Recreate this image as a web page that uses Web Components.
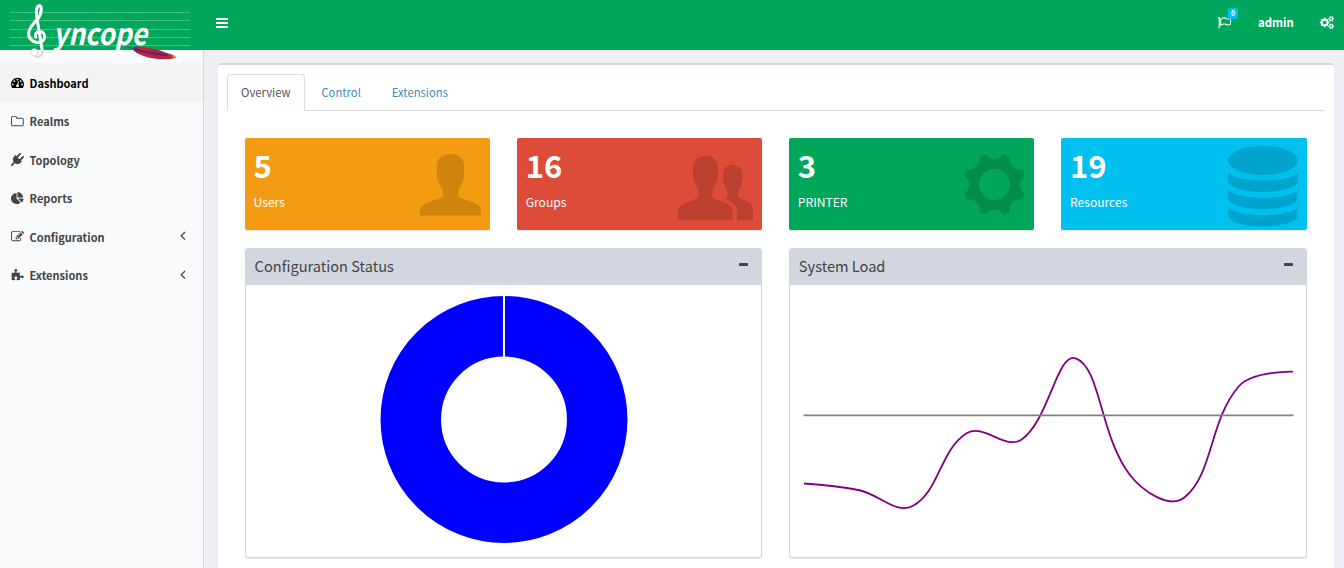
<!DOCTYPE html>
<html lang="en">
<head>
<meta charset="utf-8">
<title>Syncope</title>
<style>
html,body{margin:0;height:100%;overflow:hidden}
body{font-family:"Noto Sans CJK SC","Source Sans Pro",sans-serif;background:#ecf0f5;color:#333}
</style>
</head>
<body>
<console-app></console-app>
<script>
const define=(name,html,setup)=>customElements.define(name,class extends HTMLElement{
  connectedCallback(){
    if(this.shadowRoot)return;
    const root=this.attachShadow({mode:'open'});
    const t=document.createElement('template');
    t.innerHTML=typeof html==='function'?html(this):html;
    root.append(t.content.cloneNode(true));
    if(setup)setup(this,root);
  }
});

const small='q0 16-149 31-12 27-30 52 51 113 51 138 0 4-4 7-122 71-124 71-8 0-46-47t-52-68q-20 2-30 2t-30-2q-14 21-52 68t-46 47q-2 0-124-71-4-3-4-7 0-25 51-138-18-25-30-52-149-15-149-31v-140q0-16 149-31 13-29 30-52-51-113-51-138 0-4 4-7 4-2 35-20t59-34 30-16q8 0 46 46.5t52 67.5q20-2 30-2t30 2q51-71 92-112l6-2q4 0 124 70 4 3 4 7 0 25-51 138 17 23 30 52 149 15 149 31z';
const P=(d,box='0 0 1792 1792')=>[box,`<path d="${d}"/>`];
const icons={
 dashboard:P('M384 1152q0-53-37.5-90.5t-90.5-37.5-90.5 37.5-37.5 90.5 37.5 90.5 90.5 37.5 90.5-37.5 37.5-90.5zm192-448q0-53-37.5-90.5t-90.5-37.5-90.5 37.5-37.5 90.5 37.5 90.5 90.5 37.5 90.5-37.5 37.5-90.5zm428 481l101-382q6-26-7.5-48.5t-38.5-29.5-48 6.5-30 39.5l-101 382q-60 5-107 43.5t-63 98.5q-20 77 20 146t117 89 146-20 89-117q16-60-6-117t-72-91zm660-33q0-53-37.5-90.5t-90.5-37.5-90.5 37.5-37.5 90.5 37.5 90.5 90.5 37.5 90.5-37.5 37.5-90.5zm-640-640q0-53-37.5-90.5t-90.5-37.5-90.5 37.5-37.5 90.5 37.5 90.5 90.5 37.5 90.5-37.5 37.5-90.5zm448 192q0-53-37.5-90.5t-90.5-37.5-90.5 37.5-37.5 90.5 37.5 90.5 90.5 37.5 90.5-37.5 37.5-90.5zm320 448q0 261-141 483-19 29-54 29h-1402q-35 0-54-29-141-221-141-483 0-182 71-348t191-286 286-191 348-71 348 71 286 191 191 286 71 348z'),
 folder:P('M1600 1312v-704q0-40-28-68t-68-28h-704q-40 0-68-28t-28-68v-64q0-40-28-68t-68-28h-320q-40 0-68 28t-28 68v960q0 40 28 68t68 28h1216q40 0 68-28t28-68zm128-704v704q0 92-66 158t-158 66h-1216q-92 0-158-66t-66-158v-960q0-92 66-158t158-66h320q92 0 158 66t66 158v32h672q92 0 158 66t66 158z','60 0 1700 1792'),
 plug:P('M1755 453q37 38 37 90.5t-37 90.5l-401 400 150 150-160 160q-163 163-389.5 186.5t-411.5-100.5l-362 362h-181v-181l362-362q-124-185-100.5-411.5t186.5-389.5l160-160 150 150 400-401q38-37 91-37t90 37 37 90.5-37 90.5l-400 401 234 234 401-400q38-37 91-37t90 37z'),
 pie:P('M768 890l546 546q-106 108-247.5 168t-298.5 60q-209 0-385.5-103t-279.5-279.5-103-385.5 103-385.5 279.5-279.5 385.5-103v762zm187 6h773q0 157-60 298.5t-168 247.5zm709-128h-768v-768q209 0 385.5 103t279.5 279.5 103 385.5z'),
 edit:P('M888 1184l116-116-152-152-116 116v56h96v96h56zm440-720q-16-16-33 1l-350 350q-17 17-1 33t33-1l350-350q17-17 1-33zm80 594v190q0 119-84.5 203.5t-203.5 84.5h-832q-119 0-203.5-84.5t-84.5-203.5v-832q0-119 84.5-203.5t203.5-84.5h832q63 0 117 25 15 7 18 23 3 17-9 29l-49 49q-14 14-32 8-23-6-45-6h-832q-66 0-113 47t-47 113v832q0 66 47 113t113 47h832q66 0 113-47t47-113v-126q0-13 9-22l64-64q15-15 35-7t20 29zm-96-738l288 288-672 672h-288v-288zm444 132l-92 92-288-288 92-92q28-28 68-28t68 28l152 152q28 28 28 68t-28 68z'),
 puzzle:P('M1755 1083q0 81-44.5 135t-123.5 54q-41 0-77.5-17.5t-59-38-56.5-38-71-17.5q-110 0-110 124 0 39 16 115t15 115v5q-22 0-33 1-34 3-97.5 11.5t-115.5 13.5-98 5q-61 0-103-26.5t-42-83.5q0-37 17.5-71t38-56.5 38-59 17.5-77.5q0-79-54-123.5t-135-44.5q-84 0-143 45.5t-59 127.5q0 43 15 83t33.5 64.5 33.5 53 15 50.5q0 45-46 89-37 35-117 35-95 0-245-24-9-2-27.5-4t-27.5-4l-13-2q-1 0-3-1-2 0-2-1v-1024q2 1 17.5 3.5t34 5 21.5 3.5q150 24 245 24 80 0 117-35 46-44 46-89 0-22-15-50.5t-33.5-53-33.5-64.5-15-83q0-82 59-127.5t144-45.5q80 0 134 44.5t54 123.5q0 41-17.5 77.5t-38 59-38 56.5-17.5 71q0 57 42 83.5t103 26.5q64 0 180-15t163-17v2q-1 2-3.5 17.5t-5 34-3.5 21.5q-24 150-24 245 0 80 35 117 44 46 89 46 22 0 50.5-15t53-33.5 64.5-33.5 83-15q82 0 127.5 59t45.5 143z'),
 cogs:P('M896 896q0-106-75-181t-181-75-181 75-75 181 75 181 181 75 181-75 75-181zm768 512q0-52-38-90t-90-38-90 38-38 90q0 53 37.5 90.5t90.5 37.5 90.5-37.5 37.5-90.5zm0-1024q0-52-38-90t-90-38-90 38-38 90q0 53 37.5 90.5t90.5 37.5 90.5-37.5 37.5-90.5zm-384 421v185q0 10-7 19.5t-16 10.5l-155 24q-11 35-32 76 34 48 90 115 7 11 7 20 0 12-7 19-23 30-82.5 89.5t-78.5 59.5q-11 0-21-7l-115-90q-37 19-77 31-11 108-23 155-7 24-30 24h-186q-11 0-20-7.5t-10-17.5l-23-153q-34-10-75-31l-118 89q-7 7-20 7-11 0-21-8-144-133-144-160 0-9 7-19 10-14 41-53t47-61q-23-44-35-82l-152-24q-10-1-17-9.5t-7-19.5v-185q0-10 7-19.5t16-10.5l155-24q11-35 32-76-34-48-90-115-7-11-7-20 0-12 7-20 22-30 82-89t79-59q11 0 21 7l115 90q34-18 77-32 11-108 23-154 7-24 30-24h186q11 0 20 7.5t10 17.5l23 153q34 10 75 31l118-89q8-7 20-7 11 0 21 8 144 133 144 160 0 8-7 19-12 16-42 54t-45 60q23 48 34 82l152 23q10 2 17 10.5t7 19.5zm640 533v140'+small+'m0-1024v140'+small,'0 0 1920 1792'),
 angle:['0 0 6 10','<path d="M5 1L1.2 4.8 5 8.6" fill="none" stroke="currentColor" stroke-width="1.3"/>'],
 minus:['0 0 9 3','<rect width="9" height="3" rx=".8"/>'],
 bars:['0 0 12 10','<rect width="12" height="2" rx=".5"/><rect y="4" width="12" height="2" rx=".5"/><rect y="8" width="12" height="2" rx=".5"/>'],
 flag:['0 0 14 12','<circle cx="1.2" cy="1.2" r="1.1"/><rect x=".7" y="1" width="1.1" height="10.500"/><path d="M2.7 2.300C5-.1 7.200.9 8.700 1.700c1.500.7 2.700.1 3.800-.6v6c-1.500 1.200-2.800 1.200-4.100.5-1.800-1-3.700-.6-5.700.6z" fill="none" stroke="currentColor" stroke-width="1.100"/>'],
 person:['0 0 61 62','<path d="M30.500 0C39 0 44.500 5 44.300 13c.2 2-.3 3.500-.1 6 .2 5-1 8-3 11.500-1.500 3-2.200 4.500-3 5.500v6.500c3 2.500 9 3.500 13.500 5.500C57.500 50 61 52.500 61 57v4.500H0V57c0-4.500 3.500-7 9.300-9 4.500-2 10.500-3 13.500-5.500V36c-.8-1-1.500-2.500-3-5.500-2-3.500-3.200-6.500-3-11.500.2-2.500-.3-4-.1-6C16.500 5 22 0 30.500 0z"/>'],
 group:['0 0 75 65','<path d="M27.500 0C35 0 40 4.500 40 11.500c0 2-.3 3 0 5.500 0 7-2 11-5.500 17v7c2.500 3 9 4 13 6 4 1.800 7.300 4 7.300 9v8H0v-8c0-5 3.200-7.200 7.500-9 4-2 10.500-3 13-6v-7C17 28 15 24 15 17c.3-2.500 0-3.500 0-5.500C15 4.500 20 0 27.500 0z"/><path d="M54.500 9c6 0 9.700 3.500 9.700 9.300 0 1.500-.3 2.500 0 4.200 0 5-1.500 8-4.500 13v5c2 2.500 6 3.300 9.300 5 3.500 1.500 6 3.500 6 7.500v11H59v-8.500c0-7-4-9.500-12.500-12.800 2.500-.7 3-1.200 3-2.200v-5c-3-5-4.500-8-4.500-13 .3-1.700 0-2.700 0-4.200C45 12.500 48.500 9 54.500 9z"/>'],
 gear:['-30.500 -30.500 61 61',''],
 database:['0 0 70 81','<ellipse cx="35" cy="14.500" rx="35" ry="14.500"/><path d="M0 27c6 5.200 20 7.500 35 7.500S64 32.200 70 27v7.500C70 41 54 46 35 46S0 41 0 34.500z"/><path d="M0 44.200c6 5.200 20 7.500 35 7.500s29-2.300 35-7.500v7.500c0 6.500-16 11.500-35 11.500S0 58.200 0 51.700z"/><path d="M0 61.500C6 66.700 20 69 35 69s29-2.300 35-7.500V69c0 6.500-16 11.500-35 11.500S0 75.500 0 69z"/>']
};
/* eight-toothed gear: concave scallops between flat teeth, with a round hole */
(()=>{
  const pt=(r,a)=>(r*Math.cos(a)).toFixed(2)+' '+(r*Math.sin(a)).toFixed(2);
  let d='';
  for(let i=0;i<8;i++){
    const a=i*Math.PI/4-Math.PI/8;
    d+=(i?'L':'M')+pt(31.700,a-.11)+'L'+pt(31.700,a+.11);
    d+='A10.200 10.200 0 0 0 '+pt(31.700,a+Math.PI/4-.11);
  }
  d+='ZM15.500 0A15.500 15.500 0 1 0-15.500 0A15.500 15.500 0 1 0 15.500 0Z';
  icons.gear[1]=`<path fill-rule="evenodd" d="${d}"/>`;
})();

define('ui-icon',el=>{
  const [box,body]=icons[el.getAttribute('name')];
  return `<style>:host{display:inline-block;flex:none}svg{display:block;width:100%;height:100%;fill:currentColor;overflow:visible}</style><svg viewBox="${box}" preserveAspectRatio="none">${body}</svg>`;
});

define('brand-logo',`<style>:host{display:block;width:204px;height:64px}svg{display:block}text{font-family:"Open Sans",sans-serif}.w{font-family:"Noto Sans CJK SC",sans-serif;font-style:italic}</style>
<svg width="204" height="64" viewBox="0 0 204 64">
<defs><linearGradient id="f"><stop offset="0" stop-color="#5a2d6e"/><stop offset=".2" stop-color="#c8213a"/><stop offset=".6" stop-color="#a8234c"/><stop offset=".85" stop-color="#c22a3c"/><stop offset="1" stop-color="#d9b441"/></linearGradient></defs>
<g stroke="#fff" stroke-opacity=".27"><path d="M10 12.500H190M10 20.500H190M10 29.500H190M10 37.500H190M10 45.500H190"/></g>
<g fill="none" stroke-linecap="round">
<path d="M35.500 56.500c5 1.500 8-2 6.800-7" stroke="#d5d7da" stroke-width="2"/>
<circle cx="34.500" cy="52.300" r="3.600" fill="#fff" stroke="#d0d3d6" stroke-width=".8"/>
<path d="M42 49L36.800 17C35.700 10 37 5.700 39.300 5.400c3 .3 2.300 8-.6 12.300-4 5-9.700 9-10 15.500-.2 5.500 4 9.300 9.300 9.300 4.500 0 7-3 6.700-6.300-.3-3.500-3-5.200-5.700-4.700-3 .4-4.300 3.200-3.300 5.800" stroke="#fff" stroke-width="3"/>
</g>
<text class="w" x="53" y="45" font-size="30" font-weight="700" fill="#fff" textLength="94" lengthAdjust="spacingAndGlyphs">yncope</text>
<text x="148.500" y="27.500" font-size="4.500" fill="#3b9d6c">TM</text>
<path d="M127 46c3 2 5 3 8 4" stroke="#46545f" fill="none"/>
<path d="M133 50c0-3 2-4 5-3.500 10 .5 20 3 29 6.500 5 1.500 8 2.500 10 4.500-5 2-12 2-19 1.500-10-1-20-4-25-9z" fill="url(#f)"/>
<path d="M135 49.500c10 2.500 21 4.500 33 6" stroke="#53246a" stroke-width="1.800" fill="none"/>
</svg>`);

define('top-bar',`<style>
:host{display:flex;height:50px;background:#00a65a;color:#fff;align-items:flex-start;position:relative;z-index:2}
brand-logo{flex:none;width:204px}
.bars{width:12px;height:10px;margin:18px 0 0 12px}
.right{margin-left:auto;display:flex;align-items:flex-start}
.flagbox{position:relative;width:40px;height:50px}
.flag{width:14px;height:12px;margin-top:17px}
.badge{position:absolute;left:10px;top:8px;width:10px;height:11px;border-radius:2px;background:#00c0ef;font:bold 7px/11px "Noto Sans CJK SC",sans-serif;text-align:center}
.user{font-weight:bold;font-size:11.400px;line-height:20px;margin-top:12px;width:62px}
.cogs{width:14px;height:13px;margin-top:16px;margin-right:10px}
</style><brand-logo></brand-logo><ui-icon class="bars" name="bars"></ui-icon>
<div class="right"><div class="flagbox"><ui-icon class="flag" name="flag"></ui-icon><span class="badge">0</span></div><span class="user">admin</span><ui-icon class="cogs" name="cogs"></ui-icon></div>`);

define('nav-item',el=>`<style>
:host{display:flex;align-items:center;box-sizing:border-box;height:38.500px;padding:0 17px 0 11px;color:#444;font-weight:bold;font-size:11.050px;line-height:20px}
:host([active]){background:#f4f4f5;color:#000}
.i{width:13px;height:13px;margin-right:5.500px}
.a{width:6px;height:10px;margin-left:auto;margin-top:-1px}
</style><ui-icon class="i" name="${el.getAttribute('icon')}"></ui-icon><span><slot></slot></span>${el.hasAttribute('tree')?'<ui-icon class="a" name="angle"></ui-icon>':''}`);

define('side-bar',`<style>:host{display:block;box-sizing:border-box;width:204px;padding-top:13.250px;background:#f9fafc;border-right:1px solid #d2d6de}</style>
<nav><nav-item active icon="dashboard">Dashboard</nav-item><nav-item icon="folder">Realms</nav-item><nav-item icon="plug">Topology</nav-item><nav-item icon="pie">Reports</nav-item><nav-item icon="edit" tree>Configuration</nav-item><nav-item icon="puzzle" tree>Extensions</nav-item></nav>`);

define('tab-strip',`<style>
:host{display:flex;height:37px;box-sizing:border-box;border-bottom:1px solid #ddd;font-size:11.300px;line-height:35px;color:#3c8dbc}
span{box-sizing:border-box;padding:0 13.400px;margin-right:2px;border:1px solid transparent;height:37px;white-space:nowrap}
.on{width:78px;padding:0 13px;color:#555;background:#fff;border-color:#ddd #ddd #fff;border-radius:4px 4px 0 0}
</style><span class="on">Overview</span><span>Control</span><span>Extensions</span>`);

define('stat-tile',el=>`<style>
:host{display:flex;justify-content:space-between;box-sizing:border-box;height:92px;padding:0 9px 0 8.600px;border-radius:2px;background:${el.getAttribute('tone')};color:#fff;box-shadow:0 1px 1px rgba(0,0,0,.1)}
b{display:block;font-size:31px;line-height:40px;margin-top:7px}
.l{font-size:12.100px;line-height:20px;margin-top:7px}
ui-icon{color:rgba(0,0,0,.15);width:${el.getAttribute('w')}px;height:${el.getAttribute('h')}px;margin-top:${el.getAttribute('t')}px}
</style><div><b>${el.getAttribute('value')}</b><div class="l"><slot></slot></div></div><ui-icon name="${el.getAttribute('icon')}"></ui-icon>`);

define('chart-panel',el=>`<style>
:host{display:block;box-sizing:border-box;height:310px;border:1px solid #d2d6de;border-radius:3px;background:#fff;box-shadow:0 1px 1px rgba(0,0,0,.1);overflow:hidden}
header{display:flex;justify-content:space-between;height:36px;background:#d2d6de;color:#444;padding:0 13px 0 8.600px;font-size:14.600px;line-height:34px}
ui-icon{width:9px;height:3px;margin-top:14px}
</style><header><span>${el.getAttribute('heading')}</span><ui-icon name="minus"></ui-icon></header><slot></slot>`);

define('donut-chart',`<style>:host{display:block}svg{display:block}</style><svg width="516" height="272" viewBox="246 285 516 272"><circle cx="504" cy="419.500" r="93.200" fill="none" stroke="#00f" stroke-width="60.500"/><path d="M504 295V358" stroke="#fff" stroke-width="2"/></svg>`);

define('load-chart',`<style>:host{display:block}svg{display:block}</style><svg width="516" height="272" viewBox="790 285 516 272" fill="none" stroke-linecap="butt"><path id="c" stroke="purple" stroke-width="1.800"/><path d="M803.500 415.300H1293.500" stroke="gray" stroke-width="1.800"/></svg>`,(el,root)=>{
  const ys=[483.500,490,506,433,439.700,358.300,475,497.500,386.500,371.700];
  const p=ys.map((y,i)=>[804+i*489/9,y]);
  const cp=p.map((q,i)=>{
    if(!i||i===p.length-1)return [q,q];
    const a=p[i-1],b=p[i+1],d1=Math.hypot(q[0]-a[0],q[1]-a[1]),d2=Math.hypot(b[0]-q[0],b[1]-q[1]);
    const fa=.4*d1/(d1+d2),fb=.4*d2/(d1+d2);
    return [[q[0]-fa*(b[0]-a[0]),q[1]-fa*(b[1]-a[1])],[q[0]+fb*(b[0]-a[0]),q[1]+fb*(b[1]-a[1])]];
  });
  let d='M'+p[0];
  for(let i=1;i<p.length;i++)d+='C'+cp[i-1][1]+' '+cp[i][0]+' '+p[i];
  root.getElementById('c').setAttribute('d',d);
});

define('console-app',`<style>
:host{display:flex;flex-direction:column;width:1344px;height:568px;overflow:hidden}
.body{display:grid;grid-template-columns:204px 1fr;flex:1;min-height:0}
main{padding:13px 10px 0 14px;min-width:0}
.box{box-sizing:border-box;height:520px;background:#fff;border-top:2px solid #d2d6de;border-radius:3px;padding:9px 9px 0;box-shadow:0 1px 1px rgba(0,0,0,.1)}
.grid{display:grid;grid-template-columns:repeat(4,1fr);column-gap:27px;row-gap:18px;margin:27px 18.500px 0 18px}
chart-panel{grid-column:span 2}
</style><top-bar></top-bar><div class="body"><side-bar></side-bar><main><section class="box"><tab-strip></tab-strip>
<div class="grid">
<stat-tile value="5" icon="person" tone="#f39c12" w="61" h="62" t="16">Users</stat-tile>
<stat-tile value="16" icon="group" tone="#dd4b39" w="75" h="65" t="18">Groups</stat-tile>
<stat-tile value="3" icon="gear" tone="#00a65a" w="61" h="61" t="16">PRINTER</stat-tile>
<stat-tile value="19" icon="database" tone="#00c0ef" w="70" h="81" t="8">Resources</stat-tile>
<chart-panel heading="Configuration Status"><donut-chart></donut-chart></chart-panel>
<chart-panel heading="System Load"><load-chart></load-chart></chart-panel>
</div></section></main></div>`);
</script>
</body>
</html>
